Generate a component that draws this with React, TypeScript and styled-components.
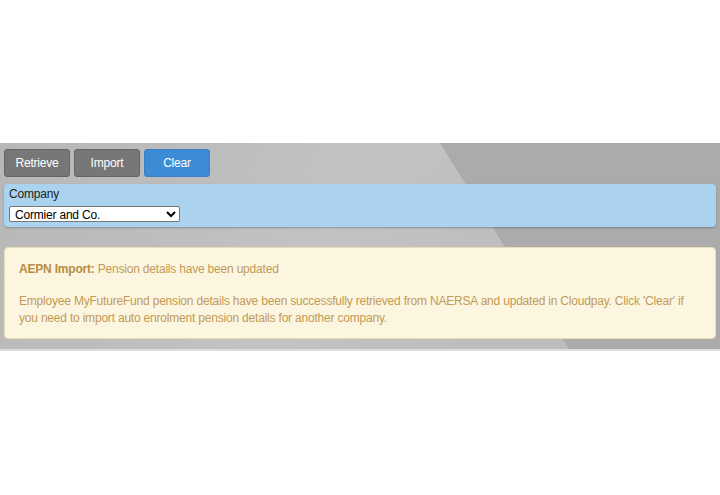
import styled, { createGlobalStyle } from "styled-components"

const GlobalStyle = createGlobalStyle`
	body {
		margin: 0;
		background: #fff;
		font-family: "Liberation Sans", Arial, sans-serif;
		letter-spacing: -0.2px;
	}
`

const App = () => {
	return (
		<>
			<GlobalStyle />
			<Page>
				<Band>
					<Toolbar>
						<ToolButton>Retrieve</ToolButton>
						<ToolButton>Import</ToolButton>
						<ToolButton $primary>Clear</ToolButton>
					</Toolbar>
					<CompanyPanel>
						<Label>Company</Label>
						<Select defaultValue="cormier">
							<option value="cormier">Cormier and Co.</option>
						</Select>
					</CompanyPanel>
					<Alert>
						<AlertLine>
							<strong>AEPN Import:</strong> Pension details have been updated
						</AlertLine>
						<AlertLine>
							Employee MyFutureFund pension details have been successfully retrieved from NAERSA and updated in Cloudpay. Click 'Clear' if you need to import auto enrolment pension details for another company.
						</AlertLine>
					</Alert>
				</Band>
			</Page>
		</>
	)
}

export default App

const Page = styled.div`
	padding-top: 143px;
`

const Band = styled.div`
	padding: 6px 4px 10px;
	border-bottom: 2px solid #dcdcdc;
	background:
		linear-gradient(58deg, transparent 67%, #ababab 67%),
		linear-gradient(120deg, #b7b7b7 0%, #bdbdbd 25%, #c3c3c3 45%, #bdbdbd 70%),
		#bbbbbb;
`

const Toolbar = styled.div`
	display: flex;
	gap: 4px;
	margin-bottom: 7px;
`

const ToolButton = styled.button<{ $primary?: boolean }>`
	width: 66px;
	height: 28px;
	border-radius: 3px;
	border: 1px solid ${p => (p.$primary ? "#3a80c4" : "#646464")};
	background: ${p => (p.$primary ? "#3d8bd4" : "#777777")};
	color: #fff;
	font-family: "Liberation Sans", Arial, sans-serif;
	font-size: 12px;
	letter-spacing: -0.2px;
	padding: 0;
	cursor: pointer;
`

const CompanyPanel = styled.div`
	display: flex;
	flex-direction: column;
	align-items: flex-start;
	gap: 4px;
	padding: 3px 5px 5px;
	background: #abd2ef;
	border-radius: 4px;
	box-shadow: 0 1px 2px rgba(0, 0, 0, 0.25);
	margin-bottom: 20px;
`

const Label = styled.div`
	font-size: 12px;
	line-height: 15px;
	color: #222;
`

const Select = styled.select`
	width: 171px;
	height: 16px;
	font-family: "Liberation Sans", Arial, sans-serif;
	font-size: 12px;
	letter-spacing: -0.2px;
	padding: 0 0 0 1px;
	border: 1px solid #767676;
	border-radius: 2px;
	background: #fff;
	color: #000;
`

const Alert = styled.div`
	padding: 13px 14px 11px;
	background: #fcf6e1;
	border: 1px solid #e8dcb8;
	border-radius: 4px;
	color: #c29a55;
	font-size: 12px;
	line-height: 17px;

	strong {
		color: #b88c43;
	}
`

const AlertLine = styled.p`
	margin: 0;

	& + & {
		margin-top: 15px;
	}
`
